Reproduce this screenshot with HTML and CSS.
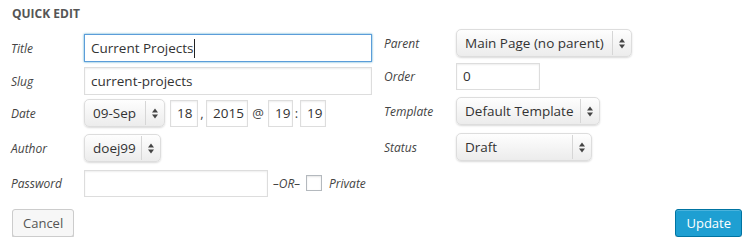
FILE: index.html
```html
<!DOCTYPE html>
<html lang="en">
<head>
    <meta charset="UTF-8">
    <title>Quick Edit</title>
    <link rel="stylesheet" href="styles.css">
</head>
<body>

    <div class="quick-edit">
        <h4>Quick Edit</h4>

        <div class="columns">
            <!-- Left column -->
            <div class="col col-left">
                <div class="row row-title">
                    <label>Title</label>
                    <div class="field field-focus w-wide">Current Projects<span class="caret"></span></div>
                </div>

                <div class="row row-slug">
                    <label>Slug</label>
                    <input type="text" class="w-wide" value="current-projects">
                </div>

                <div class="row row-date">
                    <label>Date</label>
                    <div class="select w-month">
                        <span class="select-text">09-Sep</span>
                        <span class="select-arrow">
                            <svg width="6" height="11" viewBox="0 0 6 11"><polygon points="0,4.5 3,0.5 6,4.5" fill="#444"/><polygon points="0,6.5 3,10.5 6,6.5" fill="#444"/></svg>
                        </span>
                    </div>
                    <input type="text" class="small w-day" value="18">
                    <span class="sep sep-comma">,</span>
                    <input type="text" class="small w-year" value="2015">
                    <span class="sep sep-at">@</span>
                    <input type="text" class="small w-hour" value="19">
                    <span class="sep sep-colon">:</span>
                    <input type="text" class="small w-min" value="19">
                </div>

                <div class="row row-author">
                    <label>Author</label>
                    <div class="select w-author">
                        <span class="select-text">doej99</span>
                        <span class="select-arrow">
                            <svg width="6" height="11" viewBox="0 0 6 11"><polygon points="0,4.5 3,0.5 6,4.5" fill="#444"/><polygon points="0,6.5 3,10.5 6,6.5" fill="#444"/></svg>
                        </span>
                    </div>
                </div>

                <div class="row row-password">
                    <label>Password</label>
                    <input type="text" class="w-pass short" value="">
                    <em class="or">&ndash;OR&ndash;</em>
                    <span class="checkbox"></span>
                    <em class="private">Private</em>
                </div>
            </div>

            <!-- Right column -->
            <div class="col col-right">
                <div class="row row-parent">
                    <label>Parent</label>
                    <div class="select w-parent">
                        <span class="select-text">Main Page (no parent)</span>
                        <span class="select-arrow">
                            <svg width="6" height="11" viewBox="0 0 6 11"><polygon points="0,4.5 3,0.5 6,4.5" fill="#444"/><polygon points="0,6.5 3,10.5 6,6.5" fill="#444"/></svg>
                        </span>
                    </div>
                </div>

                <div class="row row-order">
                    <label>Order</label>
                    <input type="text" class="w-order short" value="0">
                </div>

                <div class="row row-template">
                    <label>Template</label>
                    <div class="select w-template">
                        <span class="select-text">Default Template</span>
                        <span class="select-arrow">
                            <svg width="6" height="11" viewBox="0 0 6 11"><polygon points="0,4.5 3,0.5 6,4.5" fill="#444"/><polygon points="0,6.5 3,10.5 6,6.5" fill="#444"/></svg>
                        </span>
                    </div>
                </div>

                <div class="row row-status">
                    <label>Status</label>
                    <div class="select w-status">
                        <span class="select-text">Draft</span>
                        <span class="select-arrow">
                            <svg width="6" height="11" viewBox="0 0 6 11"><polygon points="0,4.5 3,0.5 6,4.5" fill="#444"/><polygon points="0,6.5 3,10.5 6,6.5" fill="#444"/></svg>
                        </span>
                    </div>
                </div>
            </div>
        </div>

        <div class="actions">
            <button class="button">Cancel</button>
            <button class="button button-primary">Update</button>
        </div>
    </div>

</body>
</html>
```

FILE: styles.css
```css
body {
    margin: 0;
    background-color: #fff;
    font-family: "Open Sans", sans-serif;
    color: #333;
}

.quick-edit {
    padding: 6px 10px 0 11px;
}

h4 {
    margin: 0 0 0 1px;
    font-size: 12px;
    line-height: 16px;
    font-weight: 700;
    text-transform: uppercase;
    color: #555;
}

.columns {
    display: flex;
    align-items: flex-start;
}

.col-left {
    width: 361px;
    padding-top: 12px;
}

.col-right {
    margin-left: 12px;
    padding-top: 7px;
}

.row {
    display: flex;
    align-items: center;
    height: 28px;
}

.col-left label {
    width: 73px;
}

.col-right label {
    width: 72px;
}

label {
    flex: none;
    font-size: 12px;
    font-style: italic;
    color: #444;
}

.row-title { margin-bottom: 5px; }
.row-slug { margin-bottom: 4px; }
.row-date { margin-bottom: 7px; }
.row-author { margin-bottom: 7px; }

.row-parent { margin-bottom: 5px; }
.row-order { margin-bottom: 7px; }
.row-template { margin-bottom: 8px; }

input[type="text"], .field {
    box-sizing: border-box;
    height: 28px;
    margin: 0;
    padding: 0 6px;
    border: 1px solid #ddd;
    border-radius: 0;
    background-color: #fff;
    box-shadow: inset 0 1px 2px rgba(0, 0, 0, 0.07);
    font-family: "Open Sans", sans-serif;
    font-size: 13.5px;
    color: #333;
    outline: none;
}

.field {
    display: flex;
    align-items: center;
}

.field-focus {
    border-color: #5b9dd9;
    box-shadow: 0 0 2px rgba(30, 140, 190, 0.8);
}

.caret {
    display: inline-block;
    width: 1px;
    height: 19px;
    margin-left: 1px;
    background-color: #222;
}

input.short, input.small {
    height: 27px;
}

input.small {
    padding: 0 0 0 6px;
}

.w-wide { width: 288px; }
.w-day { width: 28px; }
.w-year { width: 42px; }
.w-hour { width: 25px; }
.w-min { width: 26px; }
.w-pass { width: 184px; }
.w-order { width: 84px; }

.w-month { width: 81px; }
.w-author { width: 77px; }
.w-parent { width: 176px; }
.w-template { width: 144px; }
.w-status { width: 136px; }

.select {
    box-sizing: border-box;
    display: flex;
    height: 28px;
    border: 1px solid #ddd;
    border-radius: 5px;
    background: linear-gradient(#fefefe, #ececec);
    box-shadow: 0 1px 2px rgba(0, 0, 0, 0.15);
    font-size: 13.5px;
    color: #333;
}

.select-text {
    flex: 1;
    display: flex;
    align-items: center;
    padding-left: 8px;
    white-space: nowrap;
    overflow: hidden;
}

.select-arrow {
    flex: none;
    width: 18px;
    display: flex;
    align-items: center;
    justify-content: center;
    border-left: 1px solid #d6d6d6;
    margin: 1px 0;
}

.row-date .select {
    margin-right: 5px;
}

.sep {
    font-size: 13px;
    color: #444;
}

.sep-comma { width: 8px; text-align: center; }
.sep-at { width: 20px; text-align: center; }
.sep-colon { width: 7px; text-align: center; }

.or {
    margin-left: 5px;
    font-size: 12px;
    color: #444;
}

.checkbox {
    box-sizing: border-box;
    width: 16px;
    height: 16px;
    margin-left: 6px;
    border: 1px solid #b4b9be;
    background-color: #fff;
    box-shadow: inset 0 1px 2px rgba(0, 0, 0, 0.1);
}

.private {
    margin-left: 7px;
    font-size: 12px;
    color: #444;
}

.actions {
    display: flex;
    justify-content: space-between;
    margin: 12px 0 0 1px;
}

.button {
    box-sizing: border-box;
    height: 28px;
    padding: 0 10px 1px;
    border: 1px solid #ccc;
    border-radius: 3px;
    background-color: #f7f7f7;
    box-shadow: 0 1px 0 #ccc;
    font-family: "Open Sans", sans-serif;
    font-size: 13px;
    color: #555;
    cursor: pointer;
}

.button-primary {
    background-color: #1e9fd2;
    border-color: #0074a2;
    box-shadow: inset 0 1px 0 rgba(120, 200, 230, 0.5), 0 1px 0 rgba(0, 0, 0, 0.15);
    color: #fff;
}
```
